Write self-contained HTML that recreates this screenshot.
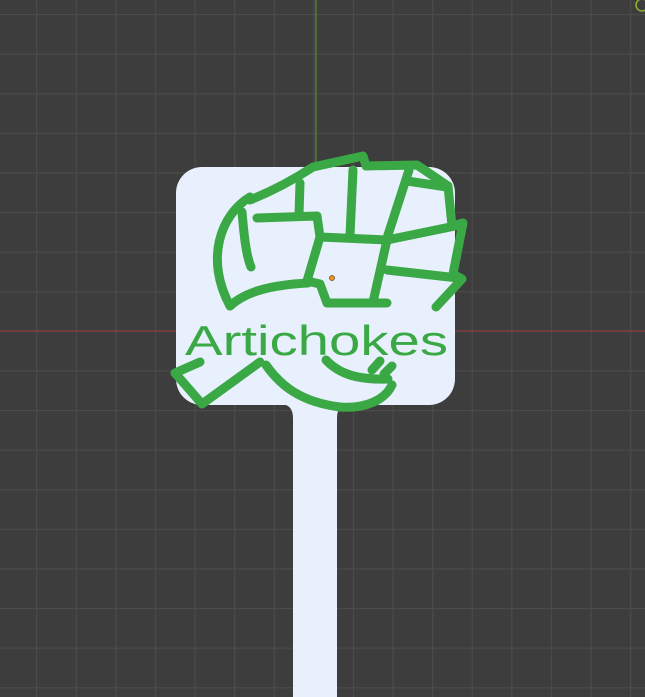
<!DOCTYPE html>
<html><head><style>
html,body{margin:0;padding:0;background:#3d3d3d;overflow:hidden}
</style></head><body>
<svg width="645" height="697" viewBox="0 0 645 697" xmlns="http://www.w3.org/2000/svg" style="display:block">
<defs>
<pattern id="g" x="-3.5" y="14" width="39.6" height="39.6" patternUnits="userSpaceOnUse">
<path d="M0.5 0V39.6M0 0.5H39.6" stroke="#4b4b4b" stroke-width="1.3" fill="none"/>
</pattern>
</defs>
<rect width="645" height="697" fill="#3d3d3d"/>
<rect width="645" height="697" fill="url(#g)"/>
<line x1="0" y1="331" x2="645" y2="331" stroke="#8a3c3c" stroke-width="1.2"/>
<line x1="316" y1="0" x2="316" y2="170" stroke="#5f8a2a" stroke-width="1.2"/>
<circle cx="642" cy="5" r="6" fill="none" stroke="#8fb030" stroke-width="1.5"/>
<rect x="176" y="167" width="279" height="238" rx="26" fill="#e8f0fd"/>
<rect x="293" y="400" width="44" height="297" fill="#e8f0fd"/>
<path d="M280 404 Q293 404 293 418 L293 404Z M350 404 Q337 404 337 418 L337 404Z" fill="#e8f0fd"/>
<g fill="none" stroke="#3aa845" stroke-width="9" stroke-linecap="round" stroke-linejoin="round">
<path d="M250 197 C220 215 205 260 230 306"/>
<path d="M242 212 C244 235 246 255 251 267"/>
<path d="M250 200 C270 192 290 182 313 167 L363 156 L366 166 L417 165 L448 186 L452 226 L463 223 L453 274 L462 279 L436 307"/>
<path d="M257 218 L317 216 L320 237 L387 240 L460 225"/>
<path d="M300 183 L299 215"/>
<path d="M353 170 L350 235"/>
<path d="M409 170 L387 238"/>
<path d="M407 181 L447 187"/>
<path d="M320 237 L307 281 L320 284 L327 303 L387 303"/>
<path d="M387 240 L373 302"/>
<path d="M387 270 L458 278"/>
<path d="M230 306 C245 292 270 285 308 283"/>
<path d="M200 362 L175 373 L202 404 L260 362"/>
<path d="M266 365 C280 385 300 402 340 407 C365 409 385 400 392 385"/>
<path d="M326 360 C340 375 360 380 388 379 M372 370 L380 361 M384 374 L392 366"/>
</g>
<text x="185" y="355" font-family="Liberation Sans, sans-serif" font-size="42" fill="#3aa845" textLength="263" lengthAdjust="spacingAndGlyphs">Artichokes</text>
<circle cx="332" cy="278" r="2.6" fill="#e8932a" stroke="#5a3a10" stroke-width="0.6"/>
</svg>
</body></html>
